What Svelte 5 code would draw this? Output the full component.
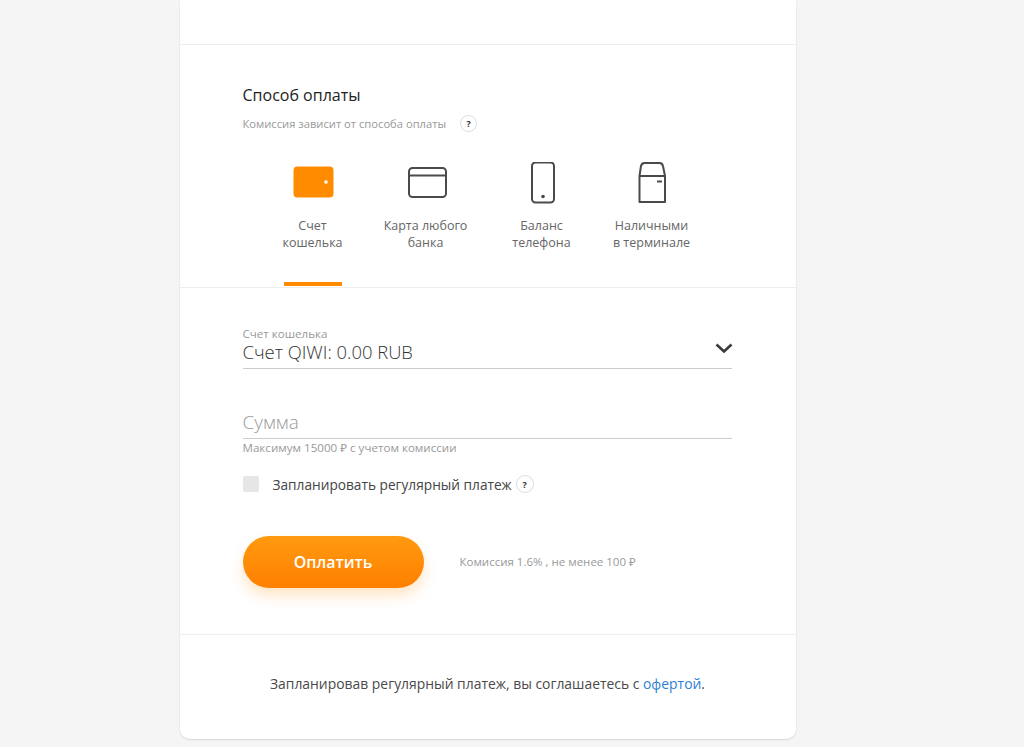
<script>
  const methods = [
    { id: "wallet", lines: ["Счет", "кошелька"], active: true },
    { id: "card", lines: ["Карта любого", "банка"] },
    { id: "phone", lines: ["Баланс", "телефона"] },
    { id: "cash", lines: ["Наличными", "в терминале"] },
  ];
</script>

<div class="page">
  <main class="card">
    <div class="top"></div>

    <!-- payment method -->
    <section class="methods">
      <h2>Способ оплаты</h2>
      <div class="hint">
        <span>Комиссия зависит от способа оплаты</span>
        <span class="help">?</span>
      </div>
      <div class="tabs">
        {#each methods as m (m.id)}
          <div class="tab" class:active={m.active}>
            <svg class="icon" width="44" height="44" viewBox="0 0 44 44" fill="none" stroke="#4a4a4a" stroke-width="2">
              {#if m.id === "wallet"}
                <rect x="2.5" y="4.5" width="40" height="31" rx="4" fill="#ff8c00" stroke="none" />
                <circle cx="35" cy="20" r="1.8" fill="#fff" stroke="none" />
              {:else if m.id === "card"}
                <rect x="5" y="6" width="37" height="29" rx="3.5" />
                <path d="M5 13.5h37" />
              {:else if m.id === "phone"}
                <rect x="12" y="0.5" width="22" height="40" rx="3.5" />
                <circle cx="23" cy="34.5" r="1.8" fill="#4a4a4a" stroke="none" />
              {:else}
                <path d="M9.5 14l1.4-9.5Q11.5 1 14.5 1h15q3 0 3.6 3.5L35 14v26H9.5z" stroke-linejoin="round" />
                <path d="M9.5 14h25.5" />
                <path d="M27 19.5h5" />
              {/if}
            </svg>
            <div class="label">{m.lines[0]}<br />{m.lines[1]}</div>
          </div>
        {/each}
      </div>
    </section>

    <!-- form -->
    <section class="form">
      <div class="field select">
        <div class="small">Счет кошелька</div>
        <div class="value">Счет QIWI: 0.00 RUB</div>
        <svg class="chevron" width="18" height="11" viewBox="0 0 18 11" fill="none" stroke="#3a3a3a" stroke-width="2.6">
          <path d="M1.5 1.5L9 8.5l7.5-7" />
        </svg>
      </div>
      <div class="field amount">
        <div class="placeholder">Сумма</div>
      </div>
      <div class="small limit">Максимум 15000 ₽ с учетом комиссии</div>
      <label class="check">
        <span class="box"></span>
        <span>Запланировать регулярный платеж</span>
        <span class="help">?</span>
      </label>
      <div class="submit">
        <button>Оплатить</button>
        <span class="fee">Комиссия 1.6% , не менее 100 ₽</span>
      </div>
    </section>

    <footer>
      Запланировав регулярный платеж, вы соглашаетесь с <a href="#offer">офертой</a>.
    </footer>
  </main>
</div>

<style>
  :global(body) {
    background: #f5f5f5;
    font-family: "Open Sans", "Noto Sans", sans-serif;
    color: #4a4a4a;
  }

  .page {
    height: 747px;
    overflow: hidden;
  }

  .card {
    width: 616px;
    height: 739px;
    margin-left: 179.5px;
    background: #fff;
    border-radius: 0 0 10px 10px;
    box-shadow: 0 1px 2px rgba(0, 0, 0, 0.12);
    display: flex;
    flex-direction: column;
  }

  .top {
    height: 44px;
    border-bottom: 1px solid #eee;
    flex-shrink: 0;
  }

  /* ── methods ── */
  .methods {
    flex-shrink: 0;
    border-bottom: 1px solid #eee;
    padding: 40px 63px 0;
    height: 202px;
  }

  h2 {
    margin: 0;
    font-size: 16px;
    line-height: 20px;
    font-weight: 500;
    color: #222;
  }

  .hint {
    display: flex;
    align-items: center;
    gap: 14px;
    margin-top: 9px;
    height: 19px;
    font-size: 11.2px;
    color: #999;
  }

  .help {
    width: 17px;
    height: 17px;
    box-sizing: border-box;
    border: 1px solid #ddd;
    border-radius: 50%;
    display: inline-flex;
    align-items: center;
    justify-content: center;
    font-size: 9px;
    font-weight: 700;
    color: #333;
    background: #fff;
  }

  .tabs {
    display: grid;
    grid-template-columns: 58px 84px 64px 72px;
    column-gap: 42px;
    margin-top: 29px;
    padding-left: 41px;
  }

  .tab {
    position: relative;
    height: 124px;
    display: flex;
    flex-direction: column;
    align-items: center;
    text-align: center;
  }

  .tab.active::after {
    content: "";
    position: absolute;
    left: 0;
    right: 0;
    bottom: 0;
    height: 4px;
    background: #ff8c00;
  }

  .icon {
    margin-bottom: 11px;
    flex-shrink: 0;
  }

  .label {
    font-size: 12.5px;
    line-height: 17px;
    color: #666;
    white-space: nowrap;
  }

  /* ── form ── */
  .form {
    flex: 1;
    padding: 39px 64px 0 63px;
    border-bottom: 1px solid #eee;
  }

  .field {
    position: relative;
    border-bottom: 1px solid #ccc;
  }

  .small {
    font-size: 11.6px;
    line-height: 13px;
    color: #999;
  }

  .value {
    font-size: 18.4px;
    font-weight: 300;
    line-height: 22px;
    padding: 1px 0 5px;
    color: #333;
  }

  .chevron {
    position: absolute;
    right: -1px;
    top: 16px;
  }

  .amount {
    margin-top: 41px;
    height: 28px;
  }

  .placeholder {
    font-size: 19px;
    font-weight: 300;
    line-height: 24px;
    color: #999;
  }

  .limit {
    margin-top: 2px;
  }

  .check {
    display: flex;
    align-items: center;
    margin-top: 20px;
    height: 20px;
    font-size: 13.7px;
    color: #444;
  }

  .box {
    width: 16px;
    height: 16px;
    border-radius: 2px;
    background: #e6e6e6;
    margin-right: 14px;
  }

  .check .help {
    margin-left: 4px;
    width: 18px;
    height: 18px;
  }

  .submit {
    display: flex;
    align-items: center;
    gap: 36px;
    margin-top: 42px;
  }

  button {
    width: 181px;
    height: 52px;
    border: none;
    border-radius: 26px;
    background: linear-gradient(#ff9a10, #ff8000);
    box-shadow: 0 8px 14px rgba(255, 140, 0, 0.22);
    color: #fff;
    font: 600 16px "Open Sans", sans-serif;
    padding: 0;
  }

  .fee {
    font-size: 11.5px;
    color: #999;
    margin-top: -2px;
  }

  /* ── footer ── */
  footer {
    height: 104px;
    padding-bottom: 8px;
    box-sizing: border-box;
    flex-shrink: 0;
    display: flex;
    align-items: center;
    justify-content: center;
    white-space: pre-wrap;
    font-size: 13.9px;
    color: #4a4a4a;
  }

  a {
    color: #2f7fd6;
    text-decoration: none;
  }
</style>
